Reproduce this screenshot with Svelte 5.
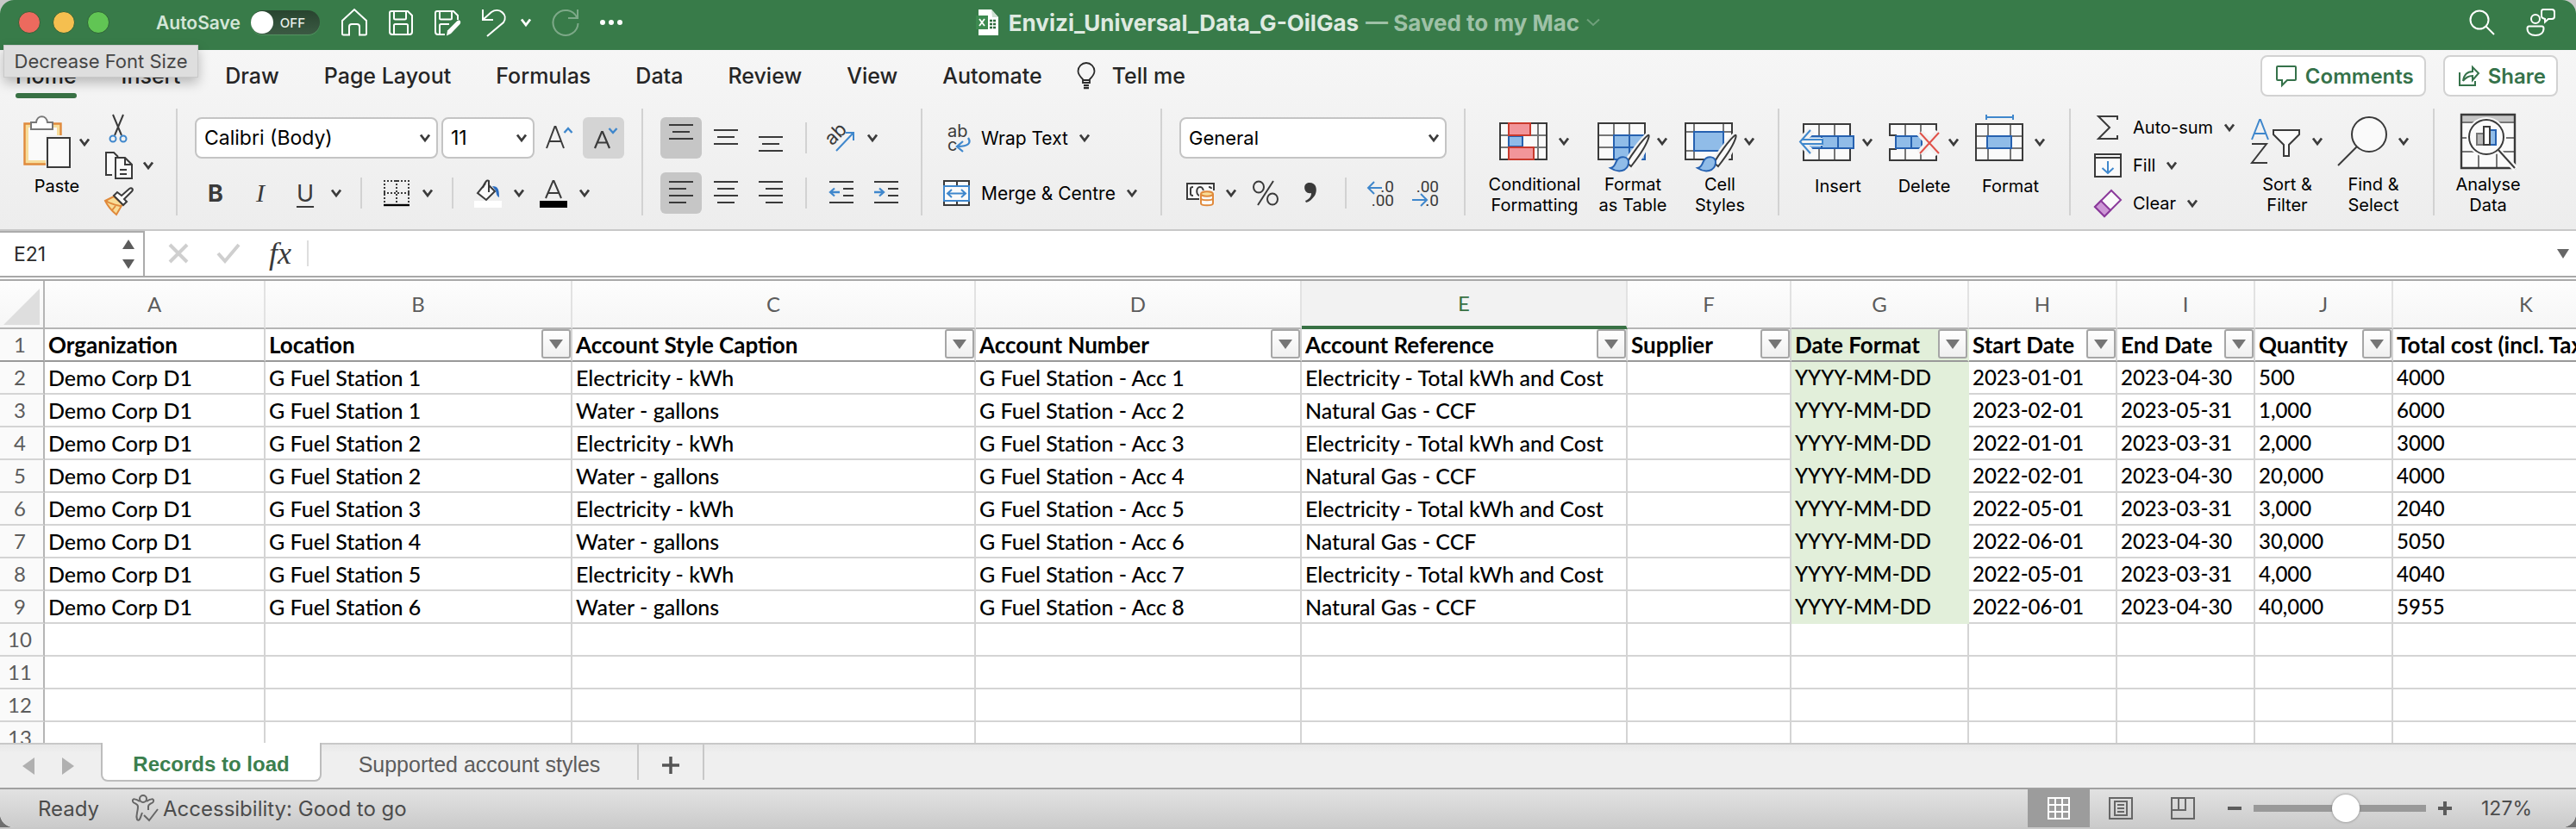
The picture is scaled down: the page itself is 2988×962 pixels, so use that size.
<script>
  const tabs = ['Home', 'Insert', 'Draw', 'Page Layout', 'Formulas', 'Data', 'Review', 'View', 'Automate'];

  const columns = [
    { letter: 'A', width: 256, title: 'Organization' },
    { letter: 'B', width: 356, title: 'Location', filter: true },
    { letter: 'C', width: 468, title: 'Account Style Caption', filter: true },
    { letter: 'D', width: 378, title: 'Account Number', filter: true },
    { letter: 'E', width: 378, title: 'Account Reference', filter: true, active: true },
    { letter: 'F', width: 190, title: 'Supplier', filter: true },
    { letter: 'G', width: 206, title: 'Date Format', filter: true, green: true, figures: true },
    { letter: 'H', width: 172, title: 'Start Date', filter: true, figures: true },
    { letter: 'I', width: 160, title: 'End Date', filter: true, figures: true },
    { letter: 'J', width: 160, title: 'Quantity', filter: true, figures: true },
    { letter: 'K', width: 310, title: 'Total cost (incl. Tax)', figures: true }
  ];

  const elec = ['Electricity - kWh', 'Electricity - Total kWh and Cost'];
  const water = ['Water - gallons', 'Natural Gas - CCF'];
  const records = [
    [1, elec, '2023-01-01', '2023-04-30', '500', '4000'],
    [1, water, '2023-02-01', '2023-05-31', '1,000', '6000'],
    [2, elec, '2022-01-01', '2023-03-31', '2,000', '3000'],
    [2, water, '2022-02-01', '2023-04-30', '20,000', '4000'],
    [3, elec, '2022-05-01', '2023-03-31', '3,000', '2040'],
    [4, water, '2022-06-01', '2023-04-30', '30,000', '5050'],
    [5, elec, '2022-05-01', '2023-03-31', '4,000', '4040'],
    [6, water, '2022-06-01', '2023-04-30', '40,000', '5955']
  ];
  const filled = records.map(([station, kind, start, end, qty, cost], i) => [
    'Demo Corp D1',
    `G Fuel Station ${station}`,
    kind[0],
    `G Fuel Station - Acc ${i + 1}`,
    kind[1],
    '',
    'YYYY-MM-DD',
    start,
    end,
    qty,
    cost
  ]);
  const rows = [...filled, ...Array.from({ length: 4 }, () => columns.map(() => ''))];

  let zoom = $state(54);
</script>

{#snippet chev()}
  <svg class="chev" width="14" height="10" viewBox="0 0 14 10"><path d="M2 1.5 7 8 12 1.5" fill="none" stroke="#3b3b3b" stroke-width="2.8" /></svg>
{/snippet}

{#snippet lines(spec)}
  <svg width="28" height="34" viewBox="0 0 28 34" stroke="#3a3a3a" stroke-width="2">
    {#each spec as [x1, x2, y]}<path d="M{x1} {y}H{x2}" />{/each}
  </svg>
{/snippet}

{#snippet brush()}
  <path d="M60 -1C52 6 39 24 33 33l8 6C48 30 59 11 60 -1z" fill="#f2f2f2" stroke="#f2f2f2" stroke-width="6" />
  <path d="M58.500 1C52 6 40 23 34 33l5 4C46 28 57 13 59.500 3c.3-2 0-2.600-1-2z" fill="#fafafa" stroke="#3a3a3a" stroke-width="2" />
  <path d="M15 38c5-1 5-4 7-8 4-7 15-6 14 2-1 10-12 12-21 6z" fill="#90bce8" stroke="#2661b0" stroke-width="2" transform="translate(0 1)" />
{/snippet}

<div class="window">
  <header class="titlebar">
    <div class="title-left">
      <div class="lights"><button class="light red" aria-label="Close"></button><button class="light yellow" aria-label="Minimise"></button><button class="light green" aria-label="Zoom window"></button></div>
      <label class="autosave"><span>AutoSave</span><input type="checkbox" /><span class="switch"><i></i><b>OFF</b></span></label>
      <div class="quick">
        <button aria-label="Home screen"><svg width="32" height="32" viewBox="0 0 32 32"><path d="M2 14 16 1 30 14v15a1.500 1.500 0 0 1-1.500 1.500H22V21q0-3-3-3h-6q-3 0-3 3v9.500H3.500A1.500 1.500 0 0 1 2 29z" /></svg></button>
        <button aria-label="Save"><svg width="32" height="32" viewBox="0 0 32 32"><path d="M5 3h19l5 5v19q0 3-3 3H6q-3 0-3-3V5q0-2 2-2zM8 3v8q0 1.500 1.500 1.500h11Q22 12.500 22 11V3M8 30V19.500q0-1.500 1.500-1.500h13q1.500 0 1.500 1.500V30" /></svg></button>
        <button aria-label="Save as"><svg width="32" height="32" viewBox="0 0 32 32"><path d="M13 30H5q-3 0-3-3V5q0-2 2-2h19l5 5v5M7 3v8q0 1.500 1.500 1.500h11Q21 12.500 21 11V3M7 30V19.500Q7 18 8.500 18H18" /><path d="M15 31.500l1-6L27 14.500c3-2.500 5.500.5 3.500 3.500L20 29z" fill="#fff" stroke="none" /></svg></button>
        <div class="pair"><button aria-label="Undo"><svg width="32" height="34" viewBox="0 0 32 34"><path d="M3 2v12h12M3 14 13 5C22-1 33 8 27 17L8 33" /></svg></button><button aria-label="Undo history"><svg width="14" height="10" viewBox="0 0 14 10"><path d="M2 1.500 7 8 12 1.500" stroke-width="2.800" /></svg></button></div>
        <button class="dim" aria-label="Redo"><svg width="34" height="34" viewBox="0 0 34 34"><path d="M31 2v10H20M30 11A14.500 14.500 0 1 0 31.500 18" /></svg></button>
        <button aria-label="More commands"><svg width="28" height="8" viewBox="0 0 28 8"><g fill="#fff" stroke="none"><circle cx="4" cy="4" r="3" /><circle cx="14" cy="4" r="3" /><circle cx="24" cy="4" r="3" /></g></svg></button>
      </div>
    </div>
    <h1 class="doc">
      <svg width="26" height="30" viewBox="0 0 26 30"><path d="M3 0h15l8 9v21H3z" fill="#fff" /><path d="M18 0l8 9h-7z" fill="#cfe0d3" /><path d="M0 7h14v16H0z" fill="#3d8a50" /><path d="M4 11l6 8M10 11l-6 8" stroke="#fff" stroke-width="1.800" /><path d="M16 13h7M16 17h7M16 21h7" stroke="#2f6b3e" stroke-width="2.600" stroke-dasharray="3 1" /></svg>
      <span>Envizi_Universal_Data_G-OilGas</span><span class="saved">— Saved to my Mac</span>
      <svg width="16" height="10" viewBox="0 0 16 10"><path d="M1 1.500 8 8 15 1.500" fill="none" stroke="#6fa07b" stroke-width="2" /></svg>
    </h1>
    <div class="title-right">
      <button aria-label="Search"><svg width="30" height="30" viewBox="0 0 30 30"><circle cx="12" cy="12" r="10.500" /><path d="M19.500 19.500 29 29" /></svg></button>
      <button aria-label="Presence"><svg width="34" height="34" viewBox="0 0 34 34"><circle cx="11" cy="13" r="5" /><path d="M3.500 21.500h15q2 0 2 2.500c0 5-4 8-9.500 8s-9.500-3-9.500-8q0-2.500 2-2.500zM20 2h10q3 0 3 3v5q0 3-3 3h-4l-4 3.500V13q-4-1-4-3V4.500Q18 2 20 2z" /></svg></button>
    </div>
  </header>

  <section class="ribbon">
    <nav class="tabs">
      {#each tabs as tab, i}<a href="#{tab}" class:current={i === 0}>{tab}</a>{/each}
      <button class="tell"><svg width="22" height="32" viewBox="0 0 22 32" fill="none" stroke="#2b2b2b" stroke-width="1.800"><path d="M7 24v-4C4 17 1.500 14.500 1.500 10.500a9.500 9.500 0 0 1 19 0C20.500 14.500 18 17 15 20v4zM7 21h8M8 27h6" /><path d="M8 30h6" stroke-width="2.500" /></svg>Tell me</button>
      <div class="actions">
        <button><svg width="26" height="26" viewBox="0 0 26 26" fill="none" stroke="#35724a" stroke-width="2"><path d="M3 2h20q1 0 1 1v14q0 1-1 1H14l-6 6v-6H3q-1 0-1-1V3q0-1 1-1z" /></svg>Comments</button>
        <button><svg width="26" height="26" viewBox="0 0 26 26" fill="none" stroke="#35724a" stroke-width="2"><path d="M2 9v15h18v-5M6 19C7 12 11 8 17 8V3l7 7-7 8v-5c-5 0-8 2-11 6z" /></svg>Share</button>
      </div>
    </nav>

    <div class="groups">
      <div class="group clip">
        <button class="big"><span class="pic"><svg width="56" height="62" viewBox="0 0 56 62"><path d="M1.500 9.500h42v47h-42z" fill="#f7dd9c" stroke="#e08a3c" stroke-width="2.400" /><path d="M6 14h33v38H6z" fill="#fafafa" /><path d="M9 16V8h6c1-9 12-9 13 0h6v8z" fill="#fff" stroke="#777" stroke-width="2" /><path d="M26 23h30v39H26z" fill="#f2f2f2" /><path d="M28 26h26v34H28z" fill="#fafafa" stroke="#3a3a3a" stroke-width="2" /></svg>{@render chev()}</span><span>Paste</span></button>
        <div class="stack">
          <button aria-label="Cut"><svg width="32" height="34" viewBox="0 0 32 34" fill="none"><path d="M10 1 20 25M22 1 12 25" stroke="#3a3a3a" stroke-width="2" /><circle cx="10" cy="29" r="3.500" stroke="#3f87cc" stroke-width="2" /><circle cx="22" cy="29" r="3.500" stroke="#3f87cc" stroke-width="2" /></svg></button>
          <button aria-label="Copy"><svg width="34" height="34" viewBox="0 0 34 34" fill="#fafafa" stroke="#3a3a3a" stroke-width="2"><path d="M9 28H2V2h9l5 5" /><path d="M13 8h11l8 8v16H13zM24 8v8h8M18 22h8M18 27h8" /></svg>{@render chev()}</button>
          <button aria-label="Format painter"><svg width="34" height="32" viewBox="0 0 34 32" stroke-width="2"><path d="M1 15 11 10l10 9-7 12C9 27 5 23 1 15z" fill="#f8dc97" stroke="#e08a3c" /><path d="M2 15c5 4 12 5 17 6M9 26l4-5" fill="none" stroke="#e08a3c" /><path d="M11 9l4-4 5 4 9-8c3-2 5 1 3 3l-9 9 3 3-4 4z" fill="#fafafa" stroke="#3a3a3a" /></svg></button>
        </div>
      </div>

      <div class="group rows">
        <div class="row">
          <label class="combo family"><select aria-label="Font"><option>Calibri (Body)</option></select>{@render chev()}</label>
          <label class="combo size"><select aria-label="Font size"><option>11</option></select>{@render chev()}</label>
          <button class="tool" aria-label="Increase font size"><svg width="32" height="32" viewBox="0 0 32 32" fill="none" stroke-width="2"><path d="M2 28 11.500 3h1L22 28M5 20h14" stroke="#3a3a3a" /><path d="M22.500 10 27 5l4.500 5" stroke="#3f87cc" stroke-width="2.400" /></svg></button><button class="tool pressed light-press" aria-label="Decrease font size"><svg width="32" height="32" viewBox="0 0 32 32" fill="none" stroke-width="2.200"><path d="M6 28 14 9h1l8 19M9 21.500h11" stroke="#3a3a3a" /><path d="M22.500 5 27 10l4.500-5" stroke="#3f87cc" stroke-width="2.400" /></svg></button>
        </div>
        <div class="row">
          <button class="tool b">B</button><button class="tool i">I</button><span class="split"><button class="tool u">U</button>{@render chev()}</span>
          <hr />
          <span class="split"><button class="tool" aria-label="Borders"><svg width="32" height="32" viewBox="0 0 32 32" fill="none" stroke="#3a3a3a" stroke-width="2"><path d="M1 2h30M1 16h30M2 1v27M16 1v27M30 1v27" stroke-dasharray="2 2" /><path d="M1 30h30" stroke="#000" stroke-width="2.400" /></svg></button>{@render chev()}</span>
          <hr />
          <span class="split"><button class="tool" aria-label="Fill colour"><svg width="34" height="34" viewBox="0 0 34 34"><path d="M14 6 5 17l10 8 10-10-7-7" fill="#fafafa" stroke="#3a3a3a" stroke-width="2" /><path d="M11 11c2-6 5-10 7-8v13" fill="none" stroke="#3a3a3a" stroke-width="2" /><path d="M22 9c7 0 8 4 8 13-4-1-3-8-5-9z" fill="#2b6cc0" /><path d="M1 26h32v8H1z" fill="#fff" /></svg></button>{@render chev()}</span>
          <span class="split"><button class="tool" aria-label="Font colour"><svg width="34" height="34" viewBox="0 0 34 34"><path d="M8 23 16.500 3h1L26 23M11 17h12" fill="none" stroke="#3a3a3a" stroke-width="2" /><path d="M1 26h32v8H1z" /></svg></button>{@render chev()}</span>
        </div>
      </div>

      <div class="group rows align">
        <div class="row">
          <button class="tool pressed" aria-label="Top align">{@render lines([[0, 28, 2], [4, 24, 10], [0, 28, 18]])}</button>
          <button class="tool" aria-label="Middle align">{@render lines([[0, 28, 8], [4, 24, 16], [0, 28, 24]])}</button>
          <button class="tool" aria-label="Bottom align">{@render lines([[0, 28, 16], [4, 24, 24], [0, 28, 32]])}</button>
          <hr />
          <span class="split"><button class="tool" aria-label="Orientation"><svg width="34" height="34" viewBox="0 0 34 34"><g fill="#3a3a3a" transform="rotate(-45 12 14)"><text x="-1" y="19" font-family="Inter, sans-serif" font-size="22">ab</text></g><path d="M11 32 31 11M22 11h9v9" fill="none" stroke="#3f87cc" stroke-width="2" /></svg></button>{@render chev()}</span>
        </div>
        <div class="row">
          <button class="tool pressed" aria-label="Align left">{@render lines([[0, 28, 4], [0, 20, 12], [0, 28, 20], [0, 20, 28]])}</button>
          <button class="tool" aria-label="Centre">{@render lines([[0, 28, 4], [4, 24, 12], [0, 28, 20], [4, 24, 28]])}</button>
          <button class="tool" aria-label="Align right">{@render lines([[0, 28, 4], [8, 28, 12], [0, 28, 20], [8, 28, 28]])}</button>
          <hr />
          <button class="tool" aria-label="Decrease indent"><svg width="28" height="34" viewBox="0 0 28 34" fill="none" stroke-width="2"><path d="M0 4h28M16 12h12M16 20h12M0 28h28" stroke="#3a3a3a" /><path d="M12 16H1M6 11.500 1 16l5 4.500" stroke="#3f87cc" stroke-width="2.300" /></svg></button>
          <button class="tool" aria-label="Increase indent"><svg width="28" height="34" viewBox="0 0 28 34" fill="none" stroke-width="2"><path d="M0 4h28M16 12h12M16 20h12M0 28h28" stroke="#3a3a3a" /><path d="M0 16h11M6 11.500 11 16l-5 4.500" stroke="#3f87cc" stroke-width="2.300" /></svg></button>
        </div>
      </div>

      <div class="group rows wrap">
        <button class="wide"><svg width="40" height="34" viewBox="0 0 40 34"><text x="9" y="16" font-family="Inter, sans-serif" font-size="20" fill="#3a3a3a">ab</text><text x="9" y="32" font-family="Inter, sans-serif" font-size="20" fill="#3a3a3a">c</text><path d="M33 17c4 6 0 10-12 10M27 21l-7 6 7 6" fill="none" stroke="#3f87cc" stroke-width="2.300" /></svg><span>Wrap Text</span>{@render chev()}</button>
        <button class="wide"><svg width="40" height="32" viewBox="0 0 40 32" fill="#fafafa" stroke="#3a3a3a" stroke-width="2"><path d="M5 2h29v28H5zM20 2v28" /><path d="M5 8h29v17H5z" stroke="#3f87cc" /><path d="M9 16.500h21M14 12l-5 4.500 5 4.500M25 12l5 4.500-5 4.500" fill="none" stroke="#3f87cc" /></svg><span>Merge &amp; Centre</span>{@render chev()}</button>
      </div>

      <div class="group rows number">
        <div class="row"><label class="combo format"><select aria-label="Number format"><option>General</option></select>{@render chev()}</label></div>
        <div class="row">
          <span class="split"><button class="tool" aria-label="Currency"><svg width="34" height="30" viewBox="0 0 34 30" fill="none" stroke="#3a3a3a" stroke-width="2"><path d="M2 4h31v18H2z" fill="#fafafa" /><path d="M9 8q-3 0-3 2v6q0 2 3 2M27 8q3 0 3 2M17 8c-5 0-5 10 0 10s5-10 0-10" /><path d="M16 12h18v18H16z" fill="#f2f2f2" stroke="none" /><path d="M18 16v11c0 3 14 3 14 0V16" fill="#fafafa" stroke="#e08a3c" /><path d="M18 21c0 3 14 3 14 0" stroke="#e08a3c" /><ellipse cx="25" cy="16" rx="7" ry="2.800" fill="#f8dc97" stroke="#e08a3c" /></svg></button>{@render chev()}</span>
          <button class="tool" aria-label="Percent"><svg width="32" height="30" viewBox="0 0 32 30" fill="none" stroke="#3a3a3a" stroke-width="2"><ellipse cx="8" cy="8" rx="6" ry="6.500" /><ellipse cx="24" cy="22" rx="6" ry="6.500" /><path d="M25 1 7 29" /></svg></button>
          <button class="tool" aria-label="Comma style"><svg width="18" height="28" viewBox="0 0 18 28" fill="#3a3a3a"><path d="M8 2c9 0 9 10 6 15-3 4-6 7-10 8l-1-2c5-2 7-5 7-9C1 16-1 2 8 2z" /></svg></button>
          <hr />
          <button class="tool" aria-label="Increase decimal"><svg width="34" height="34" viewBox="0 0 34 34"><text x="32" y="16" text-anchor="end" font-family="Roboto, sans-serif" font-size="19" fill="#3a3a3a">.0</text><text x="32" y="32" text-anchor="end" font-family="Roboto, sans-serif" font-size="19" fill="#3a3a3a">.00</text><path d="M18 11H3M9 4 2 11l7 7" fill="none" stroke="#3f87cc" stroke-width="2" /></svg></button>
          <button class="tool" aria-label="Decrease decimal"><svg width="34" height="34" viewBox="0 0 34 34"><text x="32" y="16" text-anchor="end" font-family="Roboto, sans-serif" font-size="19" fill="#3a3a3a">.00</text><text x="32" y="32" text-anchor="end" font-family="Roboto, sans-serif" font-size="19" fill="#3a3a3a">.0</text><path d="M1 25h16M11 18l7 7-7 7" fill="none" stroke="#3f87cc" stroke-width="2" /></svg></button>
        </div>
      </div>

      <div class="group styles">
        <button class="big c1"><span class="pic"><svg width="56" height="44" viewBox="0 0 56 44"><path d="M1 1h54v42H1z" fill="#fafafa" /><path d="M11 1v42M45 1v42M1 15h54M1 29h54" stroke="#767676" stroke-width="2" /><path d="M28 16h16v12H28z" fill="#fafafa" /><path d="M1 1h54v42H1z" fill="none" stroke="#3a3a3a" stroke-width="2" /><path d="M11 16h16v12H11z" fill="#90bce8" stroke="#2661b0" stroke-width="2" /><path d="M11 1h25v14H11zM11 29h29v14H11z" fill="#f2959a" stroke="#c93a2d" stroke-width="2" /></svg>{@render chev()}</span><span>Conditional<br />Formatting</span></button>
        <button class="big c2"><span class="pic"><svg width="56" height="44" viewBox="0 0 56 44"><path d="M1 1h54v42H1z" fill="#fafafa" /><path d="M19 1v14M37 1v14M1 15h18M1 29h18M19 15v28" stroke="#767676" stroke-width="2" /><path d="M19 15h36v28H19z" fill="#90bce8" /><path d="M19 15h36v28H19zM37 15v28M19 29h36" fill="none" stroke="#2661b0" stroke-width="2" /><path d="M19 43H1V1h54v14" fill="none" stroke="#3a3a3a" stroke-width="2" /><g transform="translate(0 14)">{@render brush()}</g></svg>{@render chev()}</span><span>Format<br />as Table</span></button>
        <button class="big c3"><span class="pic"><svg width="56" height="44" viewBox="0 0 56 44"><path d="M1 1h54v42H1z" fill="#fafafa" /><path d="M11 1v42M45 1v42M1 11h54M1 33h54" stroke="#767676" stroke-width="2" /><path d="M1 1h54v42H1z" fill="none" stroke="#3a3a3a" stroke-width="2" /><path d="M11 11h34v22H11z" fill="#90bce8" stroke="#2661b0" stroke-width="2" /><g transform="translate(0 14)">{@render brush()}</g></svg>{@render chev()}</span><span>Cell<br />Styles</span></button>
      </div>

      <div class="group cells">
        <button class="big"><span class="pic"><svg width="56" height="44" viewBox="0 0 56 44"><path d="M1 1h54v42H1z" fill="#fafafa" stroke="#3a3a3a" stroke-width="2" /><path d="M19 2v40M37 2v40" stroke="#767676" stroke-width="2" /><path d="M-1 14h24v15H-1z" fill="#f2f2f2" /><path d="M8 15h51v14H8z" fill="#90bce8" stroke="#2661b0" stroke-width="2" /><path d="M22 15v14M41 15v14" stroke="#2661b0" stroke-width="2" /><path d="M10 8-2 21.500 10 35M-1 21.500h24" fill="none" stroke="#f2f2f2" stroke-width="9" /><path d="M9 8-3 21.500 9 35M-1 19h24v5H-1" fill="none" stroke="#3f87cc" stroke-width="2" /></svg>{@render chev()}</span><span>Insert</span></button>
        <button class="big"><span class="pic"><svg width="56" height="44" viewBox="0 0 56 44"><path d="M1 1h54v42H1z" fill="#fafafa" stroke="#3a3a3a" stroke-width="2" /><path d="M19 2v12M37 2v12M19 30v12M37 30v12" stroke="#767676" stroke-width="2" /><path d="M-1 15h60v14H-1z" fill="#f2f2f2" /><path d="M1 14h8M1 30h8" stroke="#3a3a3a" stroke-width="2" /><path d="M8 15h30v14H8zM26 15v14" fill="#90bce8" stroke="#2661b0" stroke-width="2" /><path d="M36 11l22 24M58 11 36 35" stroke="#f2f2f2" stroke-width="9" /><path d="M36 11l22 24M58 11 36 35" stroke="#e0524a" stroke-width="2" /></svg>{@render chev()}</span><span>Delete</span></button>
        <button class="big"><span class="pic"><svg width="56" height="44" viewBox="0 0 56 44"><path d="M1 1h54v42H1z" fill="#fafafa" /><path d="M15 1v42M41 1v42M1 15h54M1 29h54" stroke="#767676" stroke-width="2" /><path d="M1 1h54v42H1z" fill="none" stroke="#3a3a3a" stroke-width="2" /><path d="M14 15h28v14H14z" fill="#90bce8" stroke="#2661b0" stroke-width="2" /><path d="M13-7h31M13-10v6M44-10v6" stroke="#3f87cc" stroke-width="2" /></svg>{@render chev()}</span><span>Format</span></button>
      </div>

      <div class="group editing">
        <div class="list">
          <button><svg width="34" height="32" viewBox="0 0 34 32" fill="none" stroke="#3a3a3a" stroke-width="2"><path d="M28 7V3H6l13 13L6 29h22v-4" /></svg><span>Auto-sum</span>{@render chev()}</button>
          <button><svg width="34" height="32" viewBox="0 0 34 32" fill="#fafafa" stroke="#3a3a3a" stroke-width="2"><path d="M2 3h30v26H2zM2 7h30" /><path d="M17 11v14M10.500 19l6.500 6 6.500-6" fill="none" stroke="#3f87cc" /></svg><span>Fill</span>{@render chev()}</button>
          <button><svg width="34" height="34" viewBox="0 0 34 34" fill="#fafafa" stroke="#8b3a9b" stroke-width="2"><path d="M21 2 32 13 13 32 2 21z" /><path d="M9 14l11 11-7 7L2 21z" fill="#cd98d6" /></svg><span>Clear</span>{@render chev()}</button>
        </div>
        <button class="big c4"><span class="pic"><svg width="58" height="54" viewBox="0 0 58 54" fill="none" stroke-width="2"><path d="M1 25 10 2h1l9 23M4 18h13" stroke="#3f87cc" /><path d="M1 30h17L1 52h18" stroke="#3a3a3a" /><path d="M26 14h30v5L44 31v13h-6V31L26 19z" fill="#fafafa" stroke="#3a3a3a" /></svg>{@render chev()}</span><span>Sort &amp;<br />Filter</span></button>
        <button class="big c5"><span class="pic"><svg width="58" height="58" viewBox="0 0 58 58" fill="#fafafa" stroke="#3a3a3a" stroke-width="2"><circle cx="37" cy="21" r="20" /><path d="M23 35 1 57" /></svg>{@render chev()}</span><span>Find &amp;<br />Select</span></button>
      </div>

      <div class="group analyse">
        <button class="big"><span class="pic"><svg width="64" height="64" viewBox="0 0 64 64" fill="none" stroke-width="2"><path d="M1 1h62v62H1z" fill="#fafafa" /><path d="M1 1h62v9H1z" fill="#c6c6c6" /><path d="M1 10h62M1 28h62M1 44h62M21 44v19M42 44v19" stroke="#767676" /><path d="M1 1h62v62H1z" stroke="#3a3a3a" stroke-width="2.400" /><circle cx="30" cy="27" r="23" fill="#fafafa" /><path d="M43 42 64 64" stroke="#fafafa" stroke-width="7" /><circle cx="30" cy="27" r="20" fill="#fafafa" stroke="#3a3a3a" /><path d="M19 23h8v13h-8z" fill="#b9b9b9" stroke="#767676" /><path d="M34 19h7v17h-7z" fill="#90bce8" stroke="#2661b0" /><path d="M27 15h7v21h-7z" fill="#fff" stroke="#3a3a3a" /><path d="M44 42 63 63" stroke="#3a3a3a" /></svg></span><span>Analyse<br />Data</span></button>
      </div>
    </div>
  </section>

  <section class="formula">
    <div class="namebox"><input aria-label="Name box" value="E21" /><div class="spin"><svg width="14" height="11" viewBox="0 0 14 11"><path d="M7 0l7 11H0z" /></svg><svg width="14" height="11" viewBox="0 0 14 11"><path d="M0 0h14L7 11z" /></svg></div></div>
    <button class="fb" aria-label="Cancel"><svg width="24" height="24" viewBox="0 0 24 24" stroke="#cfcfcf" stroke-width="4"><path d="M2 2l20 20M22 2 2 22" /></svg></button>
    <button class="fb" aria-label="Enter"><svg width="28" height="24" viewBox="0 0 28 24" fill="none" stroke="#cfcfcf" stroke-width="4"><path d="M2 12l8 9L26 2" /></svg></button>
    <button class="fb fx" aria-label="Insert function"><i>fx</i></button>
    <input class="entry" aria-label="Formula" />
    <button class="expand" aria-label="Expand formula bar"><svg width="14" height="11" viewBox="0 0 14 11"><path d="M0 0h14L7 11z" /></svg></button>
  </section>

  <main class="sheet">
    <table>
      <colgroup><col class="rowcol" />{#each columns as c}<col style="width: {c.width}px" />{/each}</colgroup>
      <thead>
        <tr class="letters"><th class="corner"><svg width="42" height="42" viewBox="0 0 42 42"><path d="M42 0v42H0z" fill="#dedede" /></svg></th>{#each columns as c}<th class:active={c.active}>{c.letter}</th>{/each}</tr>
        <tr class="titles"><th class="num">1</th>{#each columns as c}<th class:shade={c.green}><div><span>{c.title}</span>{#if c.filter}<button aria-label="Filter {c.title}"><svg width="16" height="11" viewBox="0 0 16 11"><path d="M0 0h16L8 11z" fill="#757575" /></svg></button>{/if}</div></th>{/each}</tr>
      </thead>
      <tbody>
        {#each rows as row, r}
          <tr><th class="num">{r + 2}</th>{#each row as value, i}<td class:figures={columns[i].figures} class:shade={columns[i].green && r < filled.length}>{value}</td>{/each}</tr>
        {/each}
      </tbody>
    </table>
  </main>

  <nav class="sheets">
    <div class="arrows"><button aria-label="Previous sheet"><svg width="14" height="20" viewBox="0 0 14 20"><path d="M14 0v20L0 10z" /></svg></button><button aria-label="Next sheet"><svg width="14" height="20" viewBox="0 0 14 20"><path d="M0 0v20l14-10z" /></svg></button></div>
    <button class="sheet-tab on">Records to load</button>
    <button class="sheet-tab">Supported account styles</button>
    <button class="add" aria-label="Add sheet"><svg width="20" height="20" viewBox="0 0 20 20"><path d="M10 0v20M0 10h20" stroke="#555" stroke-width="3.500" /></svg></button>
  </nav>

  <footer class="status">
    <span class="ready">Ready</span>
    <button class="access"><svg width="32" height="32" viewBox="0 0 32 32" fill="none" stroke="#666" stroke-width="2"><circle cx="14" cy="5" r="4" /><path d="M10 8C6 5 1 4 2 8c1 3 6 2 6 6 0 7-3 10-1 15 3 3 4-3 6-8M18 8c4-3 9-4 8 0-1 3-6 2-6 6v4M15 24l6 6L31 17" /></svg>Accessibility: Good to go</button>
    <div class="views">
      <button class="sel" aria-label="Normal view"><svg width="26" height="26" viewBox="0 0 26 26" fill="none" stroke="#fff" stroke-width="2"><path d="M1 1h24v24H1zM9 1v24M17 1v24M1 9h24M1 17h24" /></svg></button>
      <button aria-label="Page layout view"><svg width="28" height="26" viewBox="0 0 28 26" fill="none" stroke="#666" stroke-width="2"><path d="M1 1h26v24H1zM7 5h14v16H7zM10 9h8M10 13h8M10 17h8" /></svg></button>
      <button aria-label="Page break view"><svg width="28" height="26" viewBox="0 0 28 26" fill="none" stroke="#666" stroke-width="2"><path d="M1 1h26v24H1zM1 15h16V1M9 1v14" /></svg></button>
    </div>
    <div class="zoom">
      <button aria-label="Zoom out"><svg width="16" height="16" viewBox="0 0 16 16"><path d="M0 8h16" stroke="#5c5c5c" stroke-width="4" /></svg></button>
      <input type="range" min="0" max="100" bind:value={zoom} aria-label="Zoom" />
      <button aria-label="Zoom in"><svg width="16" height="16" viewBox="0 0 16 16"><path d="M0 8h16M8 0v16" stroke="#5c5c5c" stroke-width="4" /></svg></button>
      <output>127%</output>
    </div>
  </footer>

  <div class="tip" role="tooltip">Decrease Font Size</div>
</div>

<style>
  :global(body) { background: linear-gradient(#c9c9c9 50%, #6e6e6e 50%); }
  .window { position: relative; box-sizing: border-box; height: calc(100vh - 2px); display: flex; flex-direction: column; overflow: hidden; border-radius: 16px; background: #fff; font-family: Inter, sans-serif; font-size: 20px; color: #000; }
  .window *, .window *::before { box-sizing: border-box; }
  svg { display: block; flex: none; overflow: visible; }
  button { font: inherit; color: inherit; background: none; border: 0; padding: 0; margin: 0; display: flex; align-items: center; justify-content: center; white-space: nowrap; }
  input, select { font: inherit; color: inherit; }

  .titlebar { flex: none; height: 58px; padding: 0 24px 6px; background: #387b49; display: grid; grid-template-columns: 1fr auto 1fr; align-items: center; }
  .title-left, .title-right, .lights, .quick, .doc, .pair, .autosave { display: flex; align-items: center; }
  .lights { gap: 14px; margin-right: 54px; margin-left: -3px; }
  .light { width: 26px; height: 26px; border-radius: 50%; border: 1px solid #2f6338; }
  .red { background: #ec6a5e; }
  .yellow { background: #f5bf4f; }
  .green { background: #61c554; }
  .autosave { gap: 12px; font-size: 21px; font-weight: 600; color: #d4e6d8; }
  .autosave input { position: absolute; opacity: 0; }
  .switch { display: flex; align-items: center; gap: 8px; width: 80px; height: 28px; border-radius: 14px; background: linear-gradient(#28442f, #3b5a43); box-shadow: 0 1px 1px #569463; }
  .switch i { width: 26px; height: 26px; border-radius: 50%; background: #fff; }
  .switch b { font-size: 15px; font-weight: 500; color: #e8efe9; }
  .quick { margin-left: 24px; gap: 22px; }
  .pair { gap: 14px; }
  .quick svg, .title-right svg { fill: none; stroke: #fff; stroke-width: 2; }
  .dim { opacity: .35; }
  .doc { margin: 0; gap: 8px; font-size: 26px; font-weight: 700; color: #dfeae1; white-space: nowrap; }
  .doc svg:first-child { margin-right: 4px; }
  .saved { color: #9fc1a7; }
  .title-right { justify-content: flex-end; gap: 36px; }

  .ribbon { flex: none; background: linear-gradient(#f6f6f6, #ededed); border-bottom: 2px solid #c8c8c8; }
  .tabs { height: 60px; padding: 0 21px 0 18px; display: flex; align-items: center; gap: 52px; font-size: 25px; font-weight: 500; color: #252525; white-space: nowrap; }
  .tabs a { position: relative; color: inherit; text-decoration: none; line-height: 30px; }
  .current::before { content: ''; position: absolute; left: 0; right: 0; top: 35px; height: 6px; border-radius: 3px; background: #387144; }
  .tell { gap: 19px; margin-left: -12px; }
  .actions { margin-left: auto; display: flex; gap: 20px; }
  .actions button { height: 48px; padding: 0 12px 0 15px; gap: 9px; border: 2px solid #d2d2d2; border-radius: 8px; background: #fff; color: #35724a; font-size: 24px; font-weight: 600; }

  .groups { display: flex; padding: 8px 0 16px; }
  .group { flex: none; height: 124px; border-right: 2px solid #d2d2d2; display: flex; padding-top: 6px; }
  .rows { flex-direction: column; gap: 16px; padding-top: 10px; padding-left: 20px; }
  .row { display: flex; align-items: center; gap: 4px; height: 48px; }
  .clip { width: 206px; padding-left: 26px; }
  .rows:nth-child(2) { width: 540px; }
  .align { width: 324px; }
  .wrap { width: 278px; }
  .number { width: 352px; }
  .styles { width: 364px; padding-left: 22px; }
  .cells { width: 338px; padding-left: 18px; }
  .editing { width: 422px; padding-left: 26px; }
  .analyse { border: 0; padding-left: 24px; }
  .analyse .big { width: 76px; }
  .big { flex-direction: column; justify-content: flex-start; line-height: 24px; text-align: center; }
  .pic { display: flex; align-items: center; justify-content: center; gap: 12px; height: 66px; margin-bottom: 6px; }
  .cells .big { width: 100px; }
  .c1 { width: 116px; }
  .c2 { width: 112px; }
  .c3 { width: 90px; }
  .c4 { width: 98px; }
  .c5 { width: 102px; }
  .clip .big { width: 80px; }
  .clip .big .pic { gap: 8px; }
  .stack { display: flex; flex-direction: column; justify-content: space-between; align-items: flex-start; height: 118px; margin-left: 15px; }
  .stack button { gap: 10px; }
  .combo { display: grid; align-items: center; }
  .combo select, .combo :global(svg) { grid-area: 1 / 1; }
  .combo :global(svg) { justify-self: end; margin-right: 8px; pointer-events: none; }
  .combo select { appearance: none; width: 100%; height: 48px; padding: 0 9px; border: 2px solid #c4c4c4; border-radius: 8px; background: #fff; font-size: 23px; }
  .family { width: 282px; }
  .size { width: 108px; }
  .format { width: 310px; }
  .format select { font-size: 22px; }
  .tool { width: 48px; height: 48px; border-radius: 6px; }
  .pressed { background: #c6c6c6; }
  .light-press { background: #d4d4d4; }
  .b, .i, .u { font-size: 27px; color: #3a3a3a; }
  .b { font-weight: 700; }
  .i { font-family: "Liberation Serif", serif; font-style: italic; font-size: 30px; }
  .u { text-decoration: underline; text-underline-offset: 5px; text-decoration-thickness: 2px; }
  .split { display: flex; align-items: center; }
  .split :global(.chev) { margin: 0 5px; }
  hr { width: 2px; height: 36px; margin: 0 12px; border: 0; background: #d2d2d2; }
  .wide { height: 48px; justify-content: flex-start; gap: 8px; font-size: 21px; }
  .wide :global(.chev) { margin-left: 4px; }
  .list { display: flex; flex-direction: column; gap: 12px; width: 176px; }
  .list button { height: 32px; gap: 12px; justify-content: flex-start; }

  .formula { flex: none; height: 58px; display: flex; align-items: center; border-bottom: 6px double #a8a8a8; background: #fff; }
  .namebox { width: 168px; height: 52px; display: flex; align-items: center; border: solid #ababab; border-width: 2px 2px 0 0; }
  .namebox input { flex: 1; min-width: 0; padding: 0 16px; border: 0; background: none; font-size: 23px; color: #2b2b2b; }
  .spin { display: flex; flex-direction: column; gap: 12px; margin-right: 10px; fill: #5c5c5c; }
  .fb { margin-left: 25px; width: 28px; }
  .fb + .fb { margin-left: 30px; }
  .fb.fx { font: 36px/40px "Liberation Serif", serif; color: #3a3a3a; width: 32px; }
  .entry { flex: 1; height: 30px; margin-left: 15px; border: 0; border-left: 2px solid #dedede; background: #fff; }
  .expand { margin-right: 8px; fill: #666; }

  .sheet { flex: 1; min-height: 0; overflow: hidden; font-family: Lato, sans-serif; font-size: 25px; }
  table { table-layout: fixed; border-collapse: separate; border-spacing: 0; width: 3086px; }
  .rowcol { width: 52px; }
  th, td { height: 38px; padding: 0 0 0 4px; border: solid #d4d4d4; border-width: 0 2px 2px 0; text-align: left; line-height: 34px; white-space: nowrap; overflow: hidden; }
  td { font-weight: 500; }
  td.figures { font-size: 24px; }
  .letters th { height: 56px; padding: 0; text-align: center; font-size: 24px; font-weight: 400; color: #5c5c5c; background: linear-gradient(#fdfdfd, #f6f6f6); border-right-color: #e2e2e2; border-bottom-color: #b5b5b5; }
  .letters .active { background: #f2f2f2; color: #387144; border-bottom: 4px solid #387144; }
  .letters .corner { border-right-color: #b5b5b5; }
  .corner svg { margin: 6px 0 0 4px; }
  th.num { padding: 0 4px 0 0; text-align: center; font-size: 24px; font-weight: 400; color: #5c5c5c; background: #fafafa; border-right-color: #b5b5b5; }
  .titles th { border-bottom-color: #999; }
  .titles div { display: flex; align-items: center; justify-content: space-between; height: 36px; font-size: 26px; }
  .titles button { flex: none; width: 34px; height: 34px; margin-bottom: 2px; border: 2px solid #a6a6a6; border-radius: 3px; background: linear-gradient(#fff, #f0f0f0); }
  td.shade, .titles .shade { background: #e2efda; border-right-color: #e2efda; }
  td.shade { border-bottom-color: #e2efda; }

  .sheets { flex: none; height: 52px; display: flex; align-items: flex-start; border-top: 2px solid #c8c8c8; background: linear-gradient(#e8e8e8, #efefef 20%); font-family: "Liberation Sans", sans-serif; font-size: 25px; color: #5c5c5c; }
  .arrows { display: flex; gap: 32px; width: 117px; height: 50px; padding-left: 26px; fill: #b0b0b0; }
  .sheet-tab { height: 41px; width: 368px; padding-top: 6px; border-right: 2px solid #c8c8c8; }
  .sheet-tab.on { width: 256px; height: 45px; margin-top: -2px; border: solid #bdbdbd; border-width: 0 2px 2px; border-radius: 0 0 8px 8px; background: #fff; color: #3b7f4e; font-size: 24px; font-weight: 700; }
  .add { width: 76px; height: 41px; padding-top: 6px; border-right: 2px solid #c8c8c8; }

  .status { flex: none; height: 46px; display: flex; align-items: center; border-top: 2px solid #a0a0a0; background: linear-gradient(#e2e2e2, #cbcbcb); font-size: 24px; color: #4c4c4c; }
  .ready { width: 108px; margin-left: 44px; }
  .access { gap: 5px; }
  .views { margin-left: auto; display: flex; align-self: stretch; }
  .views button { width: 72px; }
  .views .sel { background: #9c9c9c; }
  .zoom { display: flex; align-items: center; gap: 14px; width: 420px; padding-left: 16px; }
  .zoom output { margin-left: 20px; font-size: 23px; }
  .zoom input { appearance: none; width: 200px; height: 32px; margin: 0; background: linear-gradient(#999, #999) center / 100% 8px no-repeat; }
  .zoom input::-webkit-slider-thumb { appearance: none; width: 32px; height: 32px; border-radius: 50%; background: #fff; box-shadow: 0 0 3px #777; }

  .tip { position: absolute; left: 4px; top: 52px; width: 226px; height: 38px; display: flex; align-items: center; justify-content: center; background: #dedede; border: 1px solid #c9c9c9; box-shadow: 0 6px 14px rgba(0, 0, 0, .25); color: #454545; font-size: 22px; white-space: nowrap; }
</style>
